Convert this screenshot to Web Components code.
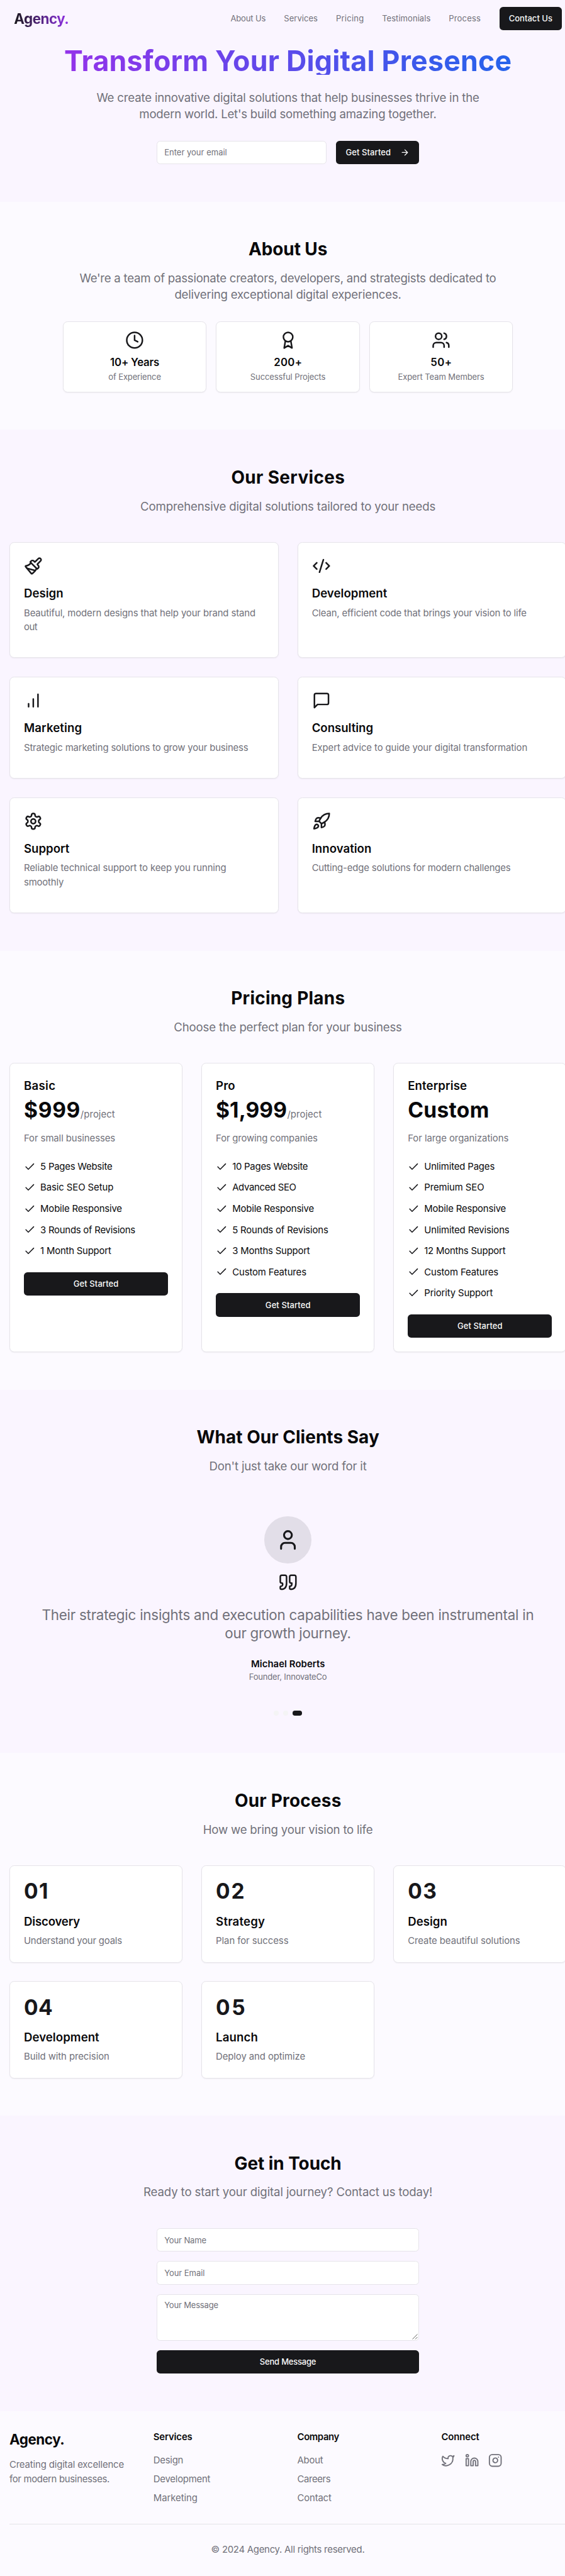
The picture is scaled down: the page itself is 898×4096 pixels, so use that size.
<!DOCTYPE html>
<html lang="en">
<head>
<meta charset="utf-8">
<title>Agency.</title>
<style>
/* 1rem = ten design units */
html{font-size:9.317px;background:#fcfaff}
body{margin:0;width:100%;overflow-x:hidden;font-family:Inter,"Liberation Sans",sans-serif;font-size:1.6rem;line-height:2.4rem;color:#09090b}
</style>
</head>
<body>
<agency-page></agency-page>
<script>
const ICONS={
clock:'<circle cx="12" cy="12" r="10"/><path d="M12 6v6l4 2"/>',
award:'<path d="M15.477 12.89 17 22l-5-3-5 3 1.523-9.11"/><circle cx="12" cy="8" r="6"/>',
users:'<path d="M16 21v-2a4 4 0 0 0-4-4H6a4 4 0 0 0-4 4v2"/><circle cx="9" cy="7" r="4"/><path d="M22 21v-2a4 4 0 0 0-3-3.87M16 3.13a4 4 0 0 1 0 7.75"/>',
brush:'<path d="m14.622 17.897-10.68-2.913"/><path d="M18.376 2.622a1 1 0 1 1 3.002 3.002L17.36 9.643a.5.5 0 0 0 0 .707l.944.944a2.41 2.41 0 0 1 0 3.408l-.944.944a.5.5 0 0 1-.707 0L8.354 7.348a.5.5 0 0 1 0-.707l.944-.944a2.41 2.41 0 0 1 3.408 0l.944.944a.5.5 0 0 0 .707 0z"/><path d="M9 8c-1.804 2.71-3.97 3.46-6.583 3.948a.507.507 0 0 0-.302.819l7.32 8.883a1 1 0 0 0 1.185.204C12.735 20.405 16 16.792 16 15"/>',
code:'<path d="m18 16 4-4-4-4M6 8l-4 4 4 4M14.5 4l-5 16"/>',
chart:'<path d="M12 20V10M18 20V4M6 20v-4"/>',
message:'<path d="M21 15a2 2 0 0 1-2 2H7l-4 4V5a2 2 0 0 1 2-2h14a2 2 0 0 1 2 2z"/>',
gear:'<path d="M12.22 2h-.44a2 2 0 0 0-2 2v.18a2 2 0 0 1-1 1.73l-.43.25a2 2 0 0 1-2 0l-.15-.08a2 2 0 0 0-2.73.73l-.22.38a2 2 0 0 0 .73 2.73l.15.1a2 2 0 0 1 1 1.72v.51a2 2 0 0 1-1 1.74l-.15.09a2 2 0 0 0-.73 2.73l.22.38a2 2 0 0 0 2.73.73l.15-.08a2 2 0 0 1 2 0l.43.25a2 2 0 0 1 1 1.73V20a2 2 0 0 0 2 2h.44a2 2 0 0 0 2-2v-.18a2 2 0 0 1 1-1.73l.43-.25a2 2 0 0 1 2 0l.15.08a2 2 0 0 0 2.73-.73l.22-.39a2 2 0 0 0-.73-2.73l-.15-.08a2 2 0 0 1-1-1.74v-.5a2 2 0 0 1 1-1.74l.15-.09a2 2 0 0 0 .73-2.73l-.22-.38a2 2 0 0 0-2.73-.73l-.15.08a2 2 0 0 1-2 0l-.43-.25a2 2 0 0 1-1-1.73V4a2 2 0 0 0-2-2z"/><circle cx="12" cy="12" r="3"/>',
rocket:'<path d="M4.5 16.5c-1.5 1.26-2 5-2 5s3.74-.5 5-2c.71-.84.7-2.13-.09-2.91a2.18 2.18 0 0 0-2.91-.09z"/><path d="m12 15-3-3a22 22 0 0 1 2-3.95A12.88 12.88 0 0 1 22 2c0 2.72-.78 7.5-6 11a22.35 22.35 0 0 1-4 2z"/><path d="M9 12H4s.55-3.03 2-4c1.62-1.08 5 0 5 0M12 15v5s3.03-.55 4-2c1.08-1.62 0-5 0-5"/>',
check:'<path d="M20 6 9 17l-5-5"/>',
user:'<path d="M19 21v-2a4 4 0 0 0-4-4H9a4 4 0 0 0-4 4v2"/><circle cx="12" cy="7" r="4"/>',
quote:'<path d="M3 21c3 0 7-1 7-8V5c0-1.25-.756-2.017-2-2H4c-1.25 0-2 .75-2 1.972V11c0 1.25.75 2 2 2 1 0 1 0 1 1v1c0 1-1 2-2 2s-1 .008-1 1.031V20c0 1 0 1 1 1z"/><path d="M15 21c3 0 7-1 7-8V5c0-1.25-.757-2.017-2-2h-4c-1.25 0-2 .75-2 1.972V11c0 1.25.75 2 2 2h.75c0 2.25.25 4-2.75 4v3c0 1 0 1 1 1z"/>',
arrow:'<path d="M5 12h14M12 5l7 7-7 7"/>',
twitter:'<path d="M22 4s-.7 2.1-2 3.4c1.6 10-9.4 17.3-18 11.6 2.2.1 4.4-.6 6-2C3 15.5.5 9.6 3 5c2.2 2.6 5.6 4.1 9 4-.9-4.2 4-6.6 7-3.8 1.1 0 3-1.2 3-1.2z"/>',
linkedin:'<path d="M16 8a6 6 0 0 1 6 6v7h-4v-7a2 2 0 0 0-2-2 2 2 0 0 0-2 2v7h-4v-7a6 6 0 0 1 6-6z"/><rect width="4" height="12" x="2" y="9"/><circle cx="4" cy="4" r="2"/>',
instagram:'<rect width="20" height="20" x="2" y="2" rx="5" ry="5"/><path d="M16 11.37A4 4 0 1 1 12.63 8 4 4 0 0 1 16 11.37zM17.5 6.5h.01"/>'
};
class Base extends HTMLElement{
  constructor(){super();this.attachShadow({mode:'open'});}
  paint(css,html){this.shadowRoot.innerHTML='<style>'+css+'</style>'+html;}
  get(n){return this.getAttribute(n)||'';}
}
/* One line of text; span = its width on a page 1568 columns wide */
const line=(text,span)=>`<fit-line span="${span}">${text}</fit-line>`;

class AppIcon extends Base{connectedCallback(){
  const s=this.get('size')/10+'rem';
  this.paint(`:host{display:block;flex:none;width:${s};height:${s}}svg{display:block;width:100%;height:100%;fill:none;stroke:currentColor;stroke-width:2;stroke-linecap:round;stroke-linejoin:round}`,
  `<svg viewBox="0 0 24 24">${ICONS[this.get('name')]}</svg>`);
}}
class AppButton extends Base{connectedCallback(){
  this.paint(`:host{display:flex;align-items:center;justify-content:center;gap:1.6rem;height:4rem;box-sizing:border-box;padding:0 1.6rem;border-radius:.6rem;background:#18181b;color:#fafafa;font-size:1.4rem;font-weight:500;line-height:2rem}`,`<slot></slot>`);
}}
class AppCard extends Base{connectedCallback(){
  this.paint(`:host{display:block;box-sizing:border-box;border:1px solid #e6e4ea;border-radius:.8rem;background:#fff;box-shadow:0 1px 2px rgb(0 0 0/.05);padding:calc(2.48rem - 1px)}`,`<slot></slot>`);
}}
class SiteHeader extends Base{connectedCallback(){
  this.paint(`:host{display:flex;align-items:center;justify-content:space-between;height:6.4rem;padding:0 2.4rem;box-sizing:border-box}
  .logo{font-size:2.4rem;line-height:3.2rem;font-weight:700;background:linear-gradient(90deg,#18181b,#9333ea);-webkit-background-clip:text;background-clip:text;color:transparent}
  nav{display:flex;align-items:center;gap:3.1rem;font-size:1.4rem;line-height:2rem;color:#71717a}app-button{margin-left:.1rem;width:10.65rem}`,
  `<div class="logo">${line('Agency.',150)}</div><nav>${line('About Us',98)}${line('Services',94)}${line('Pricing',74)}${line('Testimonials',135)}${line('Process',87)}<app-button>${line('Contact Us',121)}</app-button></nav>`);
}}
class SiteHero extends Base{connectedCallback(){
  this.paint(`:host{display:flex;flex-direction:column;align-items:center;padding:1.6rem 0 6.4rem;text-align:center}
  h1{margin:0;font-size:4.8rem;line-height:4.8rem;font-weight:700;background:linear-gradient(90deg,#9333ea,#2563eb);-webkit-background-clip:text;background-clip:text;color:transparent}
  p{margin:2.4rem 0 3.2rem;font-size:2rem;line-height:2.8rem;color:#71717a}
  form{display:flex;gap:1.6rem;width:44.8rem}text-field{flex:1}app-button{width:14.2rem}`,
  `<h1>${line('Transform Your Digital Presence',1237)}</h1><p>${line('We create innovative digital solutions that help businesses thrive in the',1061)}<br>${line("modern world. Let's build something amazing together.",821)}</p>
  <form><text-field>${line('Enter your email',172)}</text-field><app-button>${line('Get Started',125)}<app-icon name="arrow" size="16"></app-icon></app-button></form>`);
}}
class TextField extends Base{connectedCallback(){
  const area=this.hasAttribute('area');
  this.paint(`:host{display:block;position:relative;box-sizing:border-box;height:${area?8:4}rem;padding:calc(${area?.88:1}rem - 1px) 1.2rem;border:1px solid #e6e4ea;border-radius:.6rem;background:#fff;color:#71717a;font-size:1.4rem;line-height:2rem;text-align:left}
  svg{position:absolute;right:1px;bottom:1px;width:9px;height:9px;stroke:#555;fill:none;stroke-width:.9}`,
  `<slot></slot>${area?'<svg viewBox="0 0 9 9"><path d="M.5 8.5l8-8M5 8.5 8.5 5"/></svg>':''}`);
}}
class PageSection extends Base{connectedCallback(){
  this.paint(`:host{display:block;padding:6.4rem 1.6rem;background:${this.get('tone')==='tint'?'#faf5ff':'transparent'}}
  header{text-align:center}h2{margin:0 0 1.6rem;font-size:3rem;line-height:3.6rem;font-weight:700}
  header div{font-size:2rem;line-height:2.8rem;color:#71717a;margin-bottom:${this.get('gap')||'4.8'}rem}`,
  `<header><h2><slot name="title"></slot></h2><div><slot name="lead"></slot></div></header><slot></slot>`);
}}
class StatCard extends Base{connectedCallback(){
  this.paint(`:host{display:block;text-align:center}app-card{padding:calc(1.68rem - 1px)}app-icon{margin:0 auto .8rem;color:#18181b}
  h3{margin:0;font-size:1.8rem;line-height:2.8rem;font-weight:600}p{margin:0;font-size:1.4rem;line-height:2rem;color:#71717a}`,
  `<app-card><app-icon name="${this.get('icon')}" size="32"></app-icon><h3><slot name="value"></slot></h3><p><slot></slot></p></app-card>`);
}}
class ServiceCard extends Base{connectedCallback(){
  this.paint(`:host{display:grid}app-icon{margin-bottom:1.6rem;color:#18181b}h3{margin:0 0 .8rem;font-size:2rem;line-height:2.8rem;font-weight:600}p{margin:0 0 1.6rem;color:#71717a}`,
  `<app-card><app-icon name="${this.get('icon')}" size="32"></app-icon><h3><slot name="title"></slot></h3><p><slot></slot></p></app-card>`);
}}
class PlanCard extends Base{connectedCallback(){
  this.paint(`:host{display:grid}h3{margin:0 0 .8rem;font-size:2rem;line-height:2.8rem;font-weight:600}
  .price{display:flex;align-items:baseline;height:4rem;line-height:4rem}b{font-size:3.6rem}
  .unit{color:#71717a;margin-left:.05rem}p{margin:1.6rem 0 2.4rem;color:#71717a}
  .list{display:grid;gap:1.2rem;margin-bottom:2.4rem}`,
  `<app-card><h3><slot name="title"></slot></h3><div class="price"><b><slot name="price"></slot></b><span class="unit"><slot name="unit"></slot></span></div><p><slot name="note"></slot></p><div class="list"><slot></slot></div><app-button>${line('Get Started',125)}</app-button></app-card>`);
}}
class PlanItem extends Base{connectedCallback(){
  this.paint(`:host{display:flex;align-items:center;gap:.8rem;height:2.4rem}app-icon{color:#18181b}`,`<app-icon name="check" size="20"></app-icon><slot></slot>`);
}}
class StepCard extends Base{connectedCallback(){
  this.paint(`:host{display:grid}b{display:block;font-size:3.6rem;line-height:4rem;color:#18181b;margin-bottom:1.6rem}h3{margin:0 0 .8rem;font-size:2rem;line-height:2.8rem;font-weight:600}p{margin:0;color:#71717a}`,
  `<app-card><b><slot name="number"></slot></b><h3><slot name="title"></slot></h3><p><slot></slot></p></app-card>`);
}}
class CardGrid extends Base{connectedCallback(){
  this.paint(`:host{display:grid;grid-template-columns:repeat(${this.get('cols')},minmax(0,1fr));gap:${this.get('gap')||'3.2'}rem;width:${this.get('width')||'95.04'}rem;margin:0 auto}`,`<slot></slot>`);
}}
class ClientQuote extends Base{connectedCallback(){
  this.paint(`:host{display:flex;flex-direction:column;align-items:center;text-align:center;padding-top:2.4rem;color:#18181b}
  .face{display:grid;place-items:center;width:8rem;height:8rem;border-radius:50%;background:rgb(24 24 27/.1);margin-bottom:1.6rem}
  blockquote{margin:2.4rem 0;font-size:2.4rem;line-height:3.2rem;color:#71717a}
  .name{font-weight:600;color:#09090b}.role{font-size:1.4rem;line-height:2rem;color:#71717a}
  .dots{display:flex;gap:.8rem;margin-top:4.8rem}i{width:.8rem;height:.8rem;border-radius:.4rem;background:#f4f4f5}i:last-child{width:1.6rem;background:#18181b}`,
  `<div class="face"><app-icon name="user" size="40"></app-icon></div><app-icon name="quote" size="32"></app-icon>
  <blockquote>${line('Their strategic insights and execution capabilities have been instrumental in',1362)}<br>${line('our growth journey.',346)}</blockquote>
  <div class="name">${line('Michael Roberts',203)}</div><div class="role">${line('Founder, InnovateCo',215)}</div><div class="dots"><i></i><i></i><i></i></div>`);
}}
class ContactForm extends Base{connectedCallback(){
  this.paint(`:host{display:grid;gap:1.6rem;width:44.8rem;margin:0 auto}`,
  `<text-field>${line('Your Name',116)}</text-field><text-field>${line('Your Email',112)}</text-field><text-field area>${line('Your Message',149)}</text-field><app-button>${line('Send Message',157)}</app-button>`);
}}
class SiteFooter extends Base{connectedCallback(){
  const col=(t,w,items)=>`<div><h4>${line(t,w)}</h4><div class="links">${items.map(i=>`<div>${line(...i)}</div>`).join('')}</div></div>`;
  this.paint(`:host{display:block;padding:3.2rem 1.6rem;color:#71717a}
  .logo{font-size:2.4rem;line-height:3.2rem;font-weight:700;color:#09090b;margin-bottom:1.6rem}
  h4{margin:0 0 1.6rem;font-size:1.6rem;font-weight:600;color:#09090b}.links{display:grid;gap:.8rem}
  .social{display:flex;gap:1.6rem}.legal{margin-top:3.2rem;border-top:1px solid #e4e4e7;padding-top:calc(3.28rem - 1px);text-align:center}`,
  `<card-grid cols="4"><div><div class="logo">${line('Agency.',151)}</div>${line('Creating digital excellence',317)}<br>${line('for modern businesses.',278)}</div>
  ${col('Services',108,[['Design',80],['Development',157],['Marketing',119]])}${col('Company',117,[['About',72],['Careers',93],['Contact',95]])}
  <div><h4>${line('Connect',105)}</h4><div class="social"><app-icon name="twitter" size="24"></app-icon><app-icon name="linkedin" size="24"></app-icon><app-icon name="instagram" size="24"></app-icon></div></div></card-grid>
  <div class="legal">${line('© 2024 Agency. All rights reserved.',424)}</div>`);
}}
class AgencyPage extends Base{connectedCallback(){
  const head=(t,w,leads)=>`<span slot="title">${line(t,w)}</span><span slot="lead">${leads.map(l=>line(...l)).join('<br>')}</span>`;
  const stat=(icon,v,vw,t,w)=>`<stat-card icon="${icon}"><span slot="value">${line(v,vw)}</span>${line(t,w)}</stat-card>`;
  const service=(icon,t,tw,...lines)=>`<service-card icon="${icon}"><span slot="title">${line(t,tw)}</span>${lines.map(l=>line(...l)).join('<br>')}</service-card>`;
  const plan=(t,tw,p,pw,unit,n,nw,items)=>`<plan-card><span slot="title">${line(t,tw)}</span><span slot="price">${line(p,pw)}</span>${unit?`<span slot="unit">${line('/project',96)}</span>`:''}<span slot="note">${line(n,nw)}</span>${items.map(i=>`<plan-item>${line(...i)}</plan-item>`).join('')}</plan-card>`;
  const step=(n,nw,t,tw,d,dw)=>`<step-card><span slot="number">${line(n,nw)}</span><span slot="title">${line(t,tw)}</span>${line(d,dw)}</step-card>`;
  this.paint(`:host{display:block;width:98.24rem}.top{background:#faf5ff}`,`
  <div class="top"><site-header></site-header><site-hero></site-hero></div>
  <page-section gap="3.2">${head('About Us',218,[["We're a team of passionate creators, developers, and strategists dedicated to",1156],['delivering exceptional digital experiences.',627]])}
   <card-grid cols="3" gap="1.6" width="76.8">${stat('clock','10+ Years',136,'of Experience',145)}${stat('award','200+',74,'Successful Projects',209)}${stat('users','50+',55,'Expert Team Members',238)}</card-grid></page-section>
  <page-section tone="tint">${head('Our Services',312,[['Comprehensive digital solutions tailored to your needs',816]])}
   <card-grid cols="2">${service('brush','Design',107,['Beautiful, modern designs that help your brand stand',639],['out',38])}${service('code','Development',208,['Clean, efficient code that brings your vision to life',595])}${service('chart','Marketing',158,['Strategic marketing solutions to grow your business',623])}${service('message','Consulting',169,['Expert advice to guide your digital transformation',595])}${service('gear','Support',127,['Reliable technical support to keep you running',558],['smoothly',110])}${service('rocket','Innovation',163,['Cutting-edge solutions for modern challenges',552])}</card-grid></page-section>
  <page-section>${head('Pricing Plans',313,[['Choose the perfect plan for your business',630]])}
   <card-grid cols="3">${plan('Basic',86,'$999',153,1,'For small businesses',252,[['5 Pages Website',197],['Basic SEO Setup',201],['Mobile Responsive',224],['3 Rounds of Revisions',264],['1 Month Support',197]])}${plan('Pro',51,'$1,999',194,1,'For growing companies',281,[['10 Pages Website',209],['Advanced SEO',177],['Mobile Responsive',224],['5 Rounds of Revisions',265],['3 Months Support',216],['Custom Features',206]])}${plan('Enterprise',162,'Custom',221,0,'For large organizations',278,[['Unlimited Pages',194],['Premium SEO',164],['Mobile Responsive',224],['Unlimited Revisions',235],['12 Months Support',226],['Custom Features',206],['Priority Support',189]])}</card-grid></page-section>
  <page-section tone="tint">${head('What Our Clients Say',507,[["Don't just take our word for it",435]])}<client-quote></client-quote></page-section>
  <page-section>${head('Our Process',293,[['How we bring your vision to life',468]])}
   <card-grid cols="3">${step('01',63,'Discovery',154,'Understand your goals',271)}${step('02',76,'Strategy',136,'Plan for success',200)}${step('03',77,'Design',107,'Create beautiful solutions',312)}${step('04',77,'Development',208,'Build with precision',234)}${step('05',77,'Launch',114,'Deploy and optimize',245)}</card-grid></page-section>
  <page-section tone="tint">${head('Get in Touch',293,[['Ready to start your digital journey? Contact us today!',798]])}<contact-form></contact-form></page-section>
  <site-footer></site-footer>`);
}}
/* Sets the tracking of a line so that its ink fills the given span */
const pen=document.createElement('canvas').getContext('2d');
class FitLine extends Base{connectedCallback(){
  this.paint(`:host{display:inline-block;white-space:nowrap}`,`<slot></slot>`);
  const text=this.textContent,cs=getComputedStyle(this),w=this.getBoundingClientRect().width;
  pen.font=`${cs.fontWeight} ${cs.fontSize} ${cs.fontFamily}`;
  const m=pen.measureText(text),bearing=m.width-m.actualBoundingBoxLeft-m.actualBoundingBoxRight;
  const track=(this.get('span')*898/1568+bearing-w)/(text.length-1);
  this.style.letterSpacing=track.toFixed(3)+'px';this.style.marginRight=(-track).toFixed(3)+'px';
}}
Object.entries({'agency-page':AgencyPage,'site-header':SiteHeader,'site-hero':SiteHero,'page-section':PageSection,'card-grid':CardGrid,'stat-card':StatCard,'service-card':ServiceCard,'plan-card':PlanCard,'plan-item':PlanItem,'step-card':StepCard,'client-quote':ClientQuote,'contact-form':ContactForm,'site-footer':SiteFooter,'app-card':AppCard,'text-field':TextField,'app-button':AppButton,'app-icon':AppIcon,'fit-line':FitLine}).forEach(([n,c])=>customElements.define(n,c));
</script>
</body>
</html>
